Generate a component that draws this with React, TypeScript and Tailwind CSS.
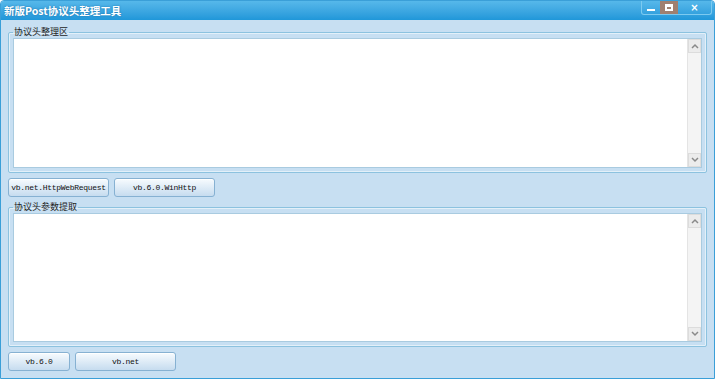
import React from "react"

const cjk = { fontFamily: '"Noto Sans CJK SC", "Noto Sans", sans-serif' }
const mono = { fontFamily: '"Liberation Mono", "DejaVu Sans Mono", monospace' }

const Chevron = ({ up }: { up?: boolean }) => (
  <svg width="8" height="6" viewBox="0 0 8 6">
    <path d={up ? "M1 5 L4 2 L7 5" : "M1 1 L4 4 L7 1"} fill="none" stroke="#8a8a8a" strokeWidth="1.5" />
  </svg>
)

const TextBox = ({ h }: { h: string }) => (
  <div className={`flex border border-[#a9cbe0] bg-white ${h}`}>
    <textarea className="flex-1 resize-none outline-none bg-white text-[10px]" />
    <div className="w-[14px] flex flex-col justify-between bg-[#f4f4f4] border-l border-[#e4e4e4]">
      <div className="h-[14px] flex items-center justify-center border border-[#dcdcdc] bg-[#ececec]">
        <Chevron up />
      </div>
      <div className="h-[14px] flex items-center justify-center border border-[#dcdcdc] bg-[#ececec]">
        <Chevron />
      </div>
    </div>
  </div>
)

const GroupBox = ({ label, h }: { label: string; h: string }) => (
  <fieldset className="border border-[#8cc2df] rounded-[2px] px-[4px] pb-[4px] shadow-[inset_0_0_0_1px_#e3f0f9]">
    <legend style={cjk} className="ml-0 px-[1px] text-[9px] leading-[12px] text-[#1e1e1e]">
      {label}
    </legend>
    <TextBox h={h} />
  </fieldset>
)

const Btn = ({ children, w }: { children: React.ReactNode; w: string }) => (
  <button
    style={mono}
    className={`${w} h-[19px] rounded-[3px] border border-[#86b1d2] bg-gradient-to-b from-[#f7fbfe] to-[#c6dcef] text-[8px] tracking-[-0.3px] text-[#111] shadow-[inset_0_1px_0_#ffffff]`}
  >
    {children}
  </button>
)

export default function App() {
  return (
    <div className="w-[715px] h-[379px] relative flex flex-col bg-[#c7dff2] border border-[#3a9fd8] rounded-t-[4px] overflow-hidden">
      <div className="h-[19px] shrink-0 flex items-center px-[3px] bg-gradient-to-b from-[#56b8ea] to-[#1f97d9]">
        <span style={cjk} className="text-[10.5px] font-bold text-white [text-shadow:0_0_2px_#1a6fa8]">
          新版Post协议头整理工具
        </span>
      </div>
      <div className="absolute right-[2px] top-0 flex h-[14px] rounded-b-[3px] overflow-hidden border border-t-0 border-[#7ccaf0]">
        <div className="w-[18px] flex items-end justify-center pb-[3px]">
          <div className="w-[8px] h-[2px] bg-white" />
        </div>
        <div className="w-[18px] flex items-center justify-center bg-[#a08070]">
          <div className="w-[8px] h-[7px] border-2 border-t-[3px] border-white" />
        </div>
        <div className="w-[33px] flex items-center justify-center text-white text-[10px] font-bold leading-none" style={{ fontFamily: '"DejaVu Sans", sans-serif' }}>
          ×
        </div>
      </div>

      <div className="flex flex-col px-[7px] pt-[6px]">
        <GroupBox label="协议头整理区" h="h-[130px]" />
        <div className="flex gap-[5px] mt-[5px]">
          <Btn w="w-[101px]">vb.net.HttpWebRequest</Btn>
          <Btn w="w-[101px]">vb.6.0.WinHttp</Btn>
        </div>
        <div className="mt-[4px]">
          <GroupBox label="协议头参数提取" h="h-[129px]" />
        </div>
        <div className="flex gap-[5px] mt-[5px]">
          <Btn w="w-[62px]">vb.6.0</Btn>
          <Btn w="w-[101px]">vb.net</Btn>
        </div>
      </div>
    </div>
  )
}
